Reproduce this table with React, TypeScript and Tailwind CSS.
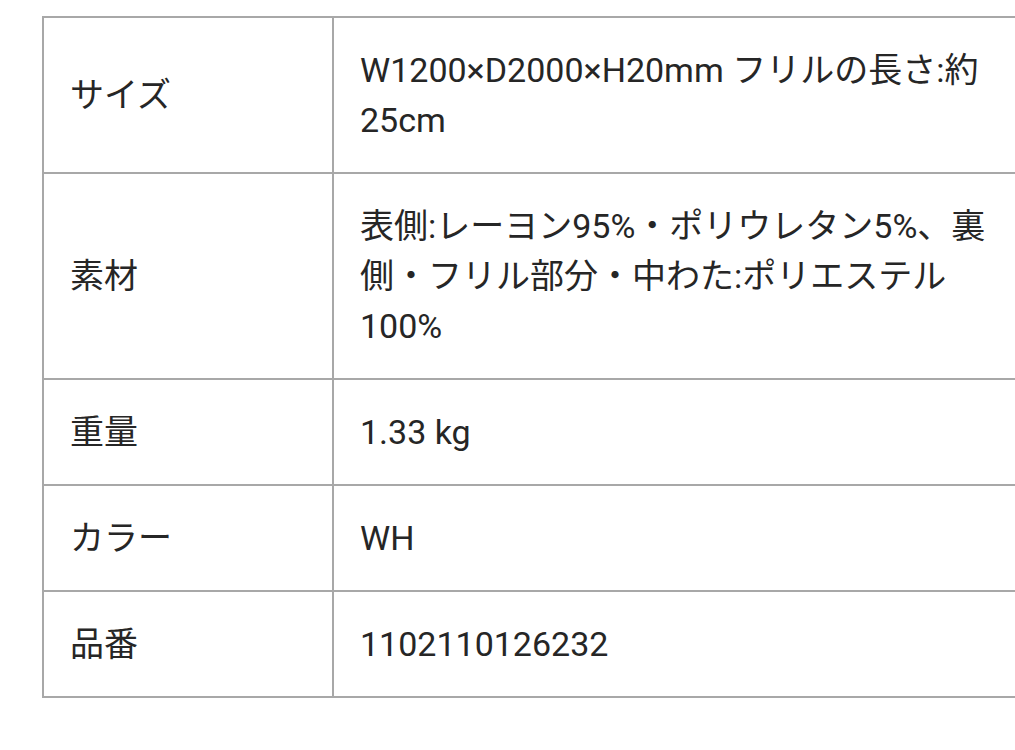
const rows: { label: string; lines: string[] }[] = [
  { label: "サイズ", lines: ["W1200×D2000×H20mm フリルの長さ:約", "25cm"] },
  {
    label: "素材",
    lines: ["表側:レーヨン95%・ポリウレタン5%、裏", "側・フリル部分・中わた:ポリエステル", "100%"],
  },
  { label: "重量", lines: ["1.33 kg"] },
  { label: "カラー", lines: ["WH"] },
  { label: "品番", lines: ["1102110126232"] },
];

export default function App() {
  return (
    <div className="w-full min-h-[750px] overflow-hidden bg-white pt-[16px] pl-[42px]">
      <table
        className="w-[1000px] table-fixed border-collapse text-[34px] leading-[50px] text-[#262626]"
        style={{ fontFamily: 'Roboto, "Noto Sans CJK JP", sans-serif' }}
      >
        <colgroup>
          <col className="w-[290px]" />
          <col />
        </colgroup>
        <tbody>
          {rows.map((row) => (
            <tr key={row.label}>
              <td className="border-2 border-[#a8a8a8] pl-[26px] pr-[26px] py-[27px] align-middle">
                {row.label}
              </td>
              <td className="border-2 border-[#a8a8a8] pl-[26px] pr-[26px] py-[27px] align-middle whitespace-nowrap">
                {row.lines.map((line, i) => (
                  <div key={i}>{line}</div>
                ))}
              </td>
            </tr>
          ))}
        </tbody>
      </table>
    </div>
  );
}
